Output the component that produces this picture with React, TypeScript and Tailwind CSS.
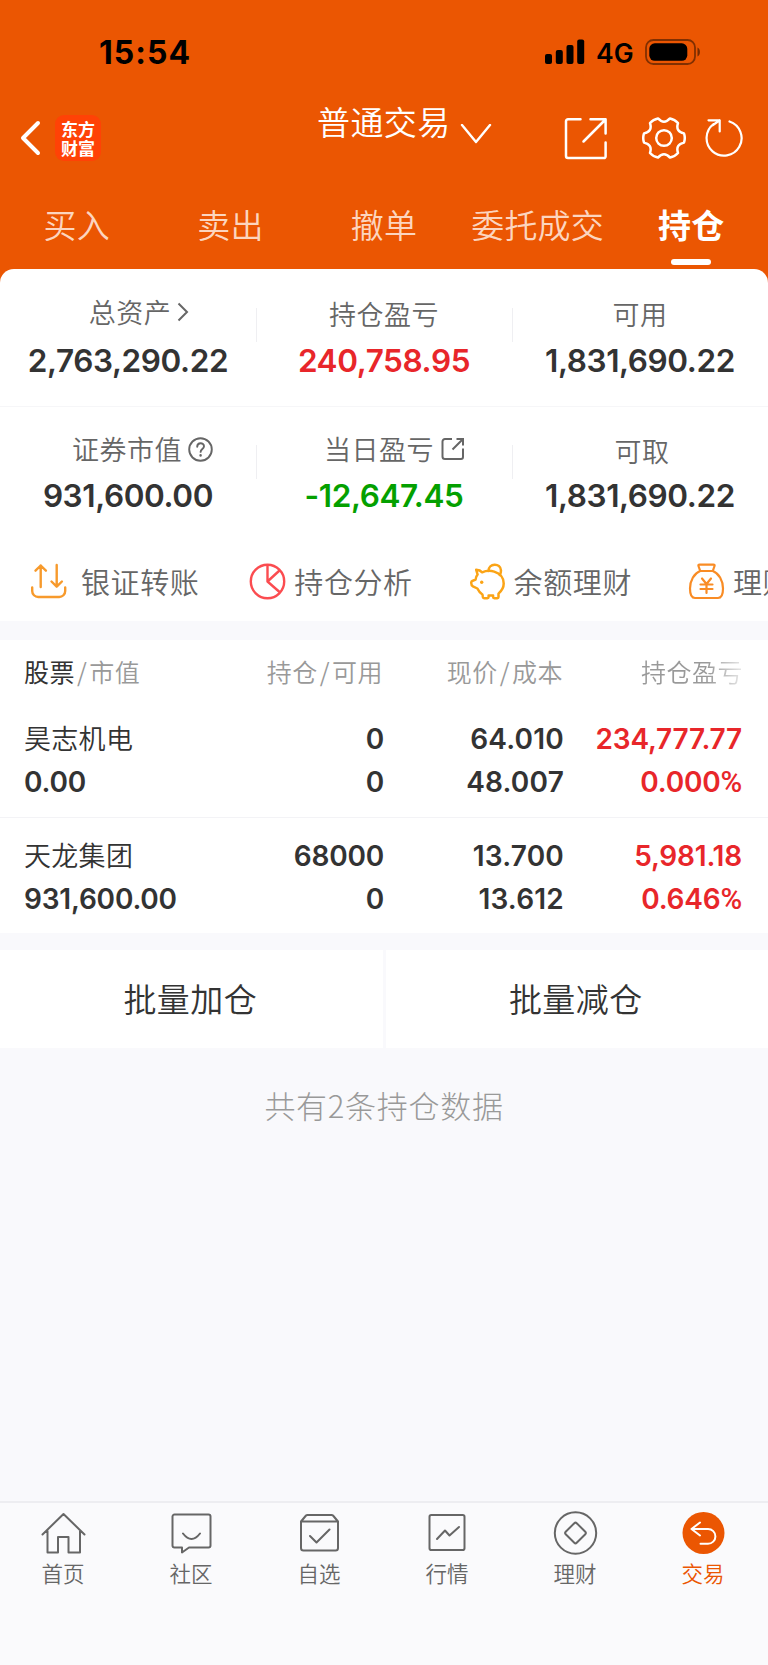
import type { ReactNode } from "react";
import clsx from "clsx";

const holdings = [
    {
        name: "昊志机电",
        marketValue: "0.00",
        position: "0",
        available: "0",
        price: "64.010",
        cost: "48.007",
        profit: "234,777.77",
        rate: "0.000",
    },
    {
        name: "天龙集团",
        marketValue: "931,600.00",
        position: "68000",
        available: "0",
        price: "13.700",
        cost: "13.612",
        profit: "5,981.18",
        rate: "0.646",
    },
];

const tabs = ["买入", "卖出", "撤单", "委托成交", "持仓"];

export default function App() {
    return (
        <div className="flex flex-col w-[768px] h-[1665px] overflow-hidden bg-[#f9f9fc] font-['Noto_Sans_CJK_SC',sans-serif] font-[350] text-[#333333] whitespace-nowrap">
            <div className="bg-[#eb5602]">
                <StatusBar />
                <TitleBar />
                <TabBar />
                <AssetPanel />
            </div>

            <HoldingTable />
            <BatchActions />

            <p className="mt-[35px] text-center text-[31px] leading-[44px] tracking-[0.7px] font-light text-[#999999]">
                共有2条持仓数据
            </p>

            <div className="flex-1" />
            <BottomNav />
        </div>
    );
}

function StatusBar() {
    return (
        <div className="flex items-center h-[104px] pl-[99px] pr-[66px] font-['Inter',sans-serif] text-black">
            <span className="mt-[2px] text-[32px] tracking-[1px] font-bold">15:54</span>
            <div className="flex-1" />
            <svg className="w-10 h-[26px]" viewBox="0 0 40 26">
                <rect x="0" y="15" width="7" height="10" rx="2" />
                <rect x="10.8" y="11" width="7" height="14" rx="2" />
                <rect x="21.5" y="6" width="7" height="19" rx="2" />
                <rect x="32.2" y="0.5" width="7" height="24.5" rx="2" />
            </svg>
            <span className="ml-[11px] mt-[3px] w-[38px] text-[26.5px] font-semibold">4G</span>
            <svg className="ml-[11px] w-[57px] h-[26px]" viewBox="0 0 57 26">
                <rect x="1" y="1" width="49" height="24" rx="7.5" fill="none" stroke="#000" strokeOpacity="0.45" strokeWidth="1.8" />
                <rect x="4.3" y="4.3" width="38" height="17.5" rx="5.5" />
                <path d="M52.5 8.5c3.2 1 3.2 8 0 9z" fillOpacity="0.5" />
            </svg>
        </div>
    );
}

function TitleBar() {
    return (
        <div className="flex items-center h-[68px] pl-[20px] pr-[24px] text-white">
            <svg className="w-[22px] h-[36px]" viewBox="0 0 22 36" fill="none" stroke="currentColor" strokeWidth="4" strokeLinecap="round" strokeLinejoin="round">
                <path d="M18 3 3 18l15 15" />
            </svg>
            <div className="ml-[13px] flex items-center justify-center size-[46px] rounded-[9px] bg-[#ff4206] text-[17px] leading-[19px] font-bold">
                东方
                <br />
                财富
            </div>
            <div className="ml-[216px] mb-[34px] flex items-center">
                <span className="text-[33px] leading-[44px] tracking-[0.4px]">普通交易</span>
                <svg className="ml-[9px] mt-[25px] w-[32px] h-[20px]" viewBox="0 0 32 20" fill="none" stroke="currentColor" strokeWidth="2.4" strokeLinecap="round" strokeLinejoin="round">
                    <path d="m2 1 14 17 14-17" />
                </svg>
            </div>
            <div className="flex-1" />
            <svg className="w-[43px] h-[43px]" viewBox="0 0 43 43" fill="none" stroke="currentColor" strokeWidth="2.5" strokeLinecap="round" strokeLinejoin="round">
                <path d="M16.5 2.2H4a2 2 0 0 0-2 2V39a2 2 0 0 0 2 2h36a1.6 1.6 0 0 0 1.6-1.6V25.5M26.5 2.2H41.6V16.5M41 3 19.5 24.5" />
            </svg>
            <svg className="ml-[35px] w-[44px] h-[44px]" viewBox="-22 -22 44 44" fill="none" stroke="currentColor" strokeWidth="2.5" strokeLinejoin="round">
                <path d="M19.97-4.61Q21.6 0 19.97 4.61Q11.26 6.5 13.98 14.99Q10.8 18.7 5.99 19.6Q0 13-5.99 19.6Q-10.8 18.7-13.98 14.99Q-11.26 6.5-19.97 4.61Q-21.6 0-19.97-4.61Q-11.26-6.5-13.98-14.99Q-10.8-18.7-5.99-19.6Q0-13 5.99-19.6Q10.8-18.7 13.98-14.99Q11.26-6.5 19.97-4.61Z" />
                <circle r="7.8" />
            </svg>
            <svg className="ml-[19px] w-[39px] h-[40px]" viewBox="0 0 39 40" fill="none" stroke="currentColor" strokeWidth="2.2" strokeLinecap="round" strokeLinejoin="round">
                <path d="M24.5 3.5A17.5 17.5 0 1 1 8.5 6.2M3.5 2.3H14.7V13.5M14.7 2.3 8 7" />
            </svg>
        </div>
    );
}

function TabBar() {
    return (
        <div className="grid grid-cols-5 h-[97px]">
            {tabs.map((tab) => {
                const active = tab === "持仓";
                return (
                    <div key={tab} className="flex flex-col items-center pt-[29px]">
                        <span
                            className={clsx(
                                "text-[33px] leading-[46px] tracking-[0.2px]",
                                active ? "font-bold text-white" : "text-[#fcd5bf]"
                            )}
                        >
                            {tab}
                        </span>
                        {active && <span className="mt-[12px] h-[6px] w-10 rounded-[3px] bg-white" />}
                    </div>
                );
            })}
        </div>
    );
}

function AssetPanel() {
    return (
        <div className="rounded-t-[14px] bg-white overflow-hidden">
            <div className="grid grid-cols-3 h-[137px] pt-[21px]">
                <AssetCell
                    label="总资产"
                    value="2,763,290.22"
                    labelClass="pl-[22px]"
                    icon={
                        <svg className="ml-[6px] w-[12px] h-[20px]" viewBox="0 0 12 20" fill="none" stroke="currentColor" strokeWidth="2">
                            <path d="m1.5 1.5 8.5 8.5-8.5 8.5" />
                        </svg>
                    }
                />
                <AssetCell label="持仓盈亏" value="240,758.95" color="text-[#e8262a]" labelClass="pt-[3px]" divider />
                <AssetCell label="可用" value="1,831,690.22" labelClass="pt-[3px]" divider />
            </div>
            <div className="grid grid-cols-3 h-[137px] pt-[20px] border-t-[1.5px] border-[#f6f6f8]">
                <AssetCell
                    label="证券市值"
                    value="931,600.00"
                    labelClass="pl-[29px]"
                    tight
                    icon={
                        <svg className="ml-[6px] w-[25px] h-[25px]" viewBox="0 0 25 25" fill="none" stroke="currentColor" strokeWidth="1.9" strokeLinecap="round">
                            <circle cx="12.5" cy="12.5" r="11.3" />
                            <path d="M9.2 9.8c0-4.7 6.8-4.5 6.8-.5 0 2.6-3.4 2.8-3.4 5.6" />
                            <path d="M12.6 18.3v.3" strokeWidth="2.4" />
                        </svg>
                    }
                />
                <AssetCell
                    label="当日盈亏"
                    value="-12,647.45"
                    color="text-[#04a000]"
                    labelClass="pl-[21px]"
                    divider
                    tight
                    icon={
                        <svg className="ml-[7px] w-[24px] h-[24px]" viewBox="0 0 24 24" fill="none" stroke="currentColor" strokeWidth="2">
                            <path d="M11 2H4a2.5 2.5 0 0 0-2.5 2.5v15A2.5 2.5 0 0 0 4 22h16a2 2 0 0 0 2-2v-8.5M15.5 2H22v6.5M22 2 11.5 12.5" />
                        </svg>
                    }
                />
                <AssetCell label="可取" value="1,831,690.22" labelClass="pt-[3px] pl-[4px]" divider tight />
            </div>
            <QuickLinks />
        </div>
    );
}

interface AssetCellProps {
    label: string;
    value: string;
    labelClass: string;
    icon?: ReactNode;
    color?: string;
    divider?: boolean;
    tight?: boolean;
}

function AssetCell({ label, value, labelClass, icon, color, divider, tight }: AssetCellProps) {
    return (
        <div className="relative flex flex-col items-center">
            {divider && <span className="absolute left-0 top-[18px] h-[34px] w-px bg-[#efeff2]" />}
            <div className={clsx("flex items-center h-[44px] text-[#666666]", labelClass)}>
                <span className="text-[27px] leading-[40px] tracking-[0.5px]">{label}</span>
                {icon}
            </div>
            <span
                className={clsx(
                    "font-['Inter',sans-serif] text-[31.5px] leading-[40px] tracking-[-0.4px] font-semibold",
                    tight ? "mt-[5px]" : "mt-[7px]",
                    color
                )}
            >
                {value}
            </span>
        </div>
    );
}

function QuickLinks() {
    return (
        <div className="flex h-[78px] pl-[30px] overflow-hidden">
            <QuickLink label="银证转账" gap="ml-[14px]">
                <svg className="w-[37px] h-[37px] text-[#f79a2c]" viewBox="0 0 37 37" fill="none" stroke="currentColor" strokeWidth="2.4" strokeLinecap="round" strokeLinejoin="round">
                    <path d="M10.7 24V2.5M5.5 7.7l5.2-5.2 5.2 5.2M26.7 2v21.5M21.5 18.5l5.2 5.2 5.2-5.2M2.2 24.5v3.5a6 6 0 0 0 6 6h21a6 6 0 0 0 6-6v-3.5" />
                </svg>
            </QuickLink>
            <QuickLink label="持仓分析" gap="ml-[8px]">
                <svg className="w-[37px] h-[37px] text-[#fb4c50]" viewBox="0 0 37 37" fill="none" stroke="currentColor" strokeWidth="2.4" strokeLinejoin="round">
                    <circle cx="18.5" cy="18.5" r="16.7" />
                    <path d="M18.5 1.8v16.7l12 10.5M18.5 18.5 30.5 7.5" />
                </svg>
            </QuickLink>
            <QuickLink label="余额理财" gap="ml-[8px]">
                <svg className="w-[37px] h-[37px] text-[#fba416]" viewBox="0 0 37 37" fill="none" stroke="currentColor" strokeWidth="2.5" strokeLinecap="round" strokeLinejoin="round">
                    <path d="M7.2 6.8c3 .2 4.8 1.2 6 2.5 3-1.3 8-1.8 12-.7 6 1.8 9.500 6.500 9.500 12 0 4.500-2.200 7.500-5.200 10v3.500q0 1.200-1.200 1.200h-3q-1.200 0-1.200-1.200v-1.700h-4.500v1.700q0 1.200-1.200 1.200h-3q-1.200 0-1.500-1.200l-.5-2.600c-2.700-1.600-3.700-3.300-5-6l-4.500-2.200q-1.700-.8-1.700-3.500 0-1.500 1.400-2l3-1.300q.2-3 2-5z" />
                    <path d="M19.5 8C19.5 0 31.5-.5 32 7.5q0 2.5-1.2 4.5" />
                    <circle cx="12.7" cy="19.3" r="1.7" fill="currentColor" stroke="none" />
                </svg>
            </QuickLink>
            <QuickLink label="理财" gap="ml-[8px]">
                <svg className="w-[37px] h-[37px] text-[#f98c25]" viewBox="0 0 37 37" fill="none" stroke="currentColor" strokeWidth="2.2" strokeLinecap="round" strokeLinejoin="round">
                    <path d="M12.2 8 10.5 3q-.5-1.3 1-1.3h14q1.5 0 1 1.3L24.8 8zM12.2 8C6 10.5 2 17.5 2 25.5c0 6.5 1.5 9.5 5 9.5h23c3.5 0 5-3 5-9.5C35 17.5 31 10.5 24.8 8" />
                    <path d="m14 15.5 4.5 5.5 4.5-5.5M12.5 21.5h12M12.5 26h12M18.5 21v9" />
                </svg>
            </QuickLink>
        </div>
    );
}

function QuickLink({ label, gap, children }: { label: string; gap: string; children: ReactNode }) {
    return (
        <div className="flex shrink-0 items-center w-[219.3px] h-[76px]">
            {children}
            <span className={clsx("text-[29px] leading-[40px] tracking-[0.6px] text-[#666666]", gap)}>{label}</span>
        </div>
    );
}

function HoldingTable() {
    return (
        <div className="mt-[19px] bg-white">
            <div className="flex h-[62px] items-center pl-[24px] pr-[25px] pt-px text-[25px] tracking-[0.5px] text-[#999999]">
                <div className="w-[200px]">
                    <span className="text-[#333333] font-normal">股票</span>
                    <Slash />
                    市值
                </div>
                <div className="w-[159px] text-right">
                    持仓
                    <Slash />
                    可用
                </div>
                <div className="w-[180px] text-right">
                    现价
                    <Slash />
                    成本
                </div>
                <div className="w-[180px] text-right bg-linear-to-r from-[#999999] from-80% to-white to-105% bg-clip-text text-transparent">
                    持仓盈亏
                </div>
            </div>

            {holdings.map((item) => (
                <div
                    key={item.name}
                    className="flex h-[116px] last:h-[115px] pt-[16px] last:pt-[17px] pl-[24px] pr-[26px] border-b-[1.5px] border-[#f3f3f6] last:border-b-0 font-['Inter',sans-serif] text-[28px] leading-[43px] tracking-[-0.2px] font-semibold"
                >
                    <div className="w-[200px]">
                        <p className="h-[43px] font-['Noto_Sans_CJK_SC',sans-serif] text-[27px] leading-[40px] tracking-[0.3px] font-[350]">{item.name}</p>
                        <p>{item.marketValue}</p>
                    </div>
                    <div className="w-[160px] text-right">
                        <p>{item.position}</p>
                        <p>{item.available}</p>
                    </div>
                    <div className="w-[180px] text-right tracking-[0.2px]">
                        <p>{item.price}</p>
                        <p>{item.cost}</p>
                    </div>
                    <div className="w-[178px] text-right text-[#e8262a]">
                        <p>{item.profit}</p>
                        <p>
                            {item.rate}
                            <span className="font-['Roboto',sans-serif] text-[29.5px] font-medium">%</span>
                        </p>
                    </div>
                </div>
            ))}
        </div>
    );
}

function Slash() {
    return <span className="mx-[2px]">/</span>;
}

function BatchActions() {
    return (
        <div className="mt-[17px] grid grid-cols-2 gap-[3px] h-[98px] text-[33px] tracking-[0.4px]">
            <button type="button" className="pb-px pr-[2px] bg-white">批量加仓</button>
            <button type="button" className="pb-px pr-[2px] bg-white">批量减仓</button>
        </div>
    );
}

function BottomNav() {
    return (
        <div className="grid grid-cols-6 h-[164px] pt-[9px] border-t-2 border-[#ededf1] bg-[#fafafc] text-[#666666]">
            <NavItem label="首页">
                <path d="M1.5 22.5 22.5 2l21 20.5M6.5 19v21.5H17V25h10.5v15.5H39V19" />
            </NavItem>
            <NavItem label="社区">
                <path d="M5.5 2.5h34a2 2 0 0 1 2 2v29a2 2 0 0 1-2 2H20l-7 5v-5H5.5a2 2 0 0 1-2-2v-29a2 2 0 0 1 2-2zM14 21.5q8.5 11 17 0" />
            </NavItem>
            <NavItem label="自选">
                <path d="M4 9.5 9 3.5Q9.5 3 10.5 3h24q1 0 1.5.5l5 6V36a2.5 2.5 0 0 1-2.5 2.5h-32A2.5 2.5 0 0 1 4 36zM4 9.5h37M13 24l6.5 6.5 13-13" />
            </NavItem>
            <NavItem label="行情">
                <rect x="4.5" y="3" width="35" height="35" rx="1.8" />
                <path d="m12 27 8-8.5 4.5 5L34 15" />
            </NavItem>
            <NavItem label="理财">
                <circle cx="22.5" cy="21" r="20.7" />
                <path d="M21.3 11.2q1.2-1.2 2.4 0l8.6 8.6q1.2 1.2 0 2.4l-8.6 8.6q-1.2 1.2-2.4 0l-8.6-8.6q-1.2-1.2 0-2.4z" />
            </NavItem>
            <NavItem label="交易" active>
                <circle cx="22.5" cy="21" r="21" fill="#eb5602" stroke="none" />
                <path stroke="#fff" d="M19 10.5 10.5 17l8.5 6.5M10.5 17H27a7.3 7.3 0 0 1 0 14.8h-7.5" />
            </NavItem>
        </div>
    );
}

function NavItem({ label, active, children }: { label: string; active?: boolean; children: ReactNode }) {
    return (
        <div className={clsx("flex flex-col items-center pr-px", active && "text-[#eb5602]")}>
            <svg className="w-[45px] h-[44px] overflow-visible" viewBox="0 0 45 44" fill="none" stroke="currentColor" strokeWidth="2" strokeLinecap="round" strokeLinejoin="round">
                {children}
            </svg>
            <span className="mt-[2px] pr-px text-[21.5px] leading-[30px]">{label}</span>
        </div>
    );
}
